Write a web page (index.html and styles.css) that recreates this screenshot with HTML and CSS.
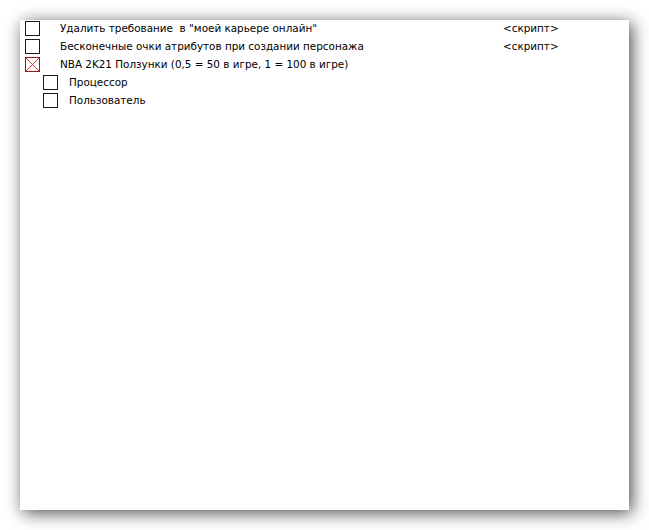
FILE: index.html
```html
<!DOCTYPE html>
<html lang="ru">
<head>
<meta charset="utf-8">
<link rel="stylesheet" href="styles.css">
</head>
<body>
<div class="panel">
  <div class="row">
    <span class="box"></span>
    <span class="label wide">Удалить требование  в "моей карьере онлайн"</span>
    <span class="value">&lt;скрипт&gt;</span>
  </div>
  <div class="row">
    <span class="box"></span>
    <span class="label wide">Бесконечные очки атрибутов при создании персонажа</span>
    <span class="value">&lt;скрипт&gt;</span>
  </div>
  <div class="row">
    <span class="box crossed"><svg viewBox="0 0 15 15" width="15" height="15"><path d="M1 1L14 14M14 1L1 14" stroke="#e0303a" stroke-width="1" fill="none"/></svg></span>
    <span class="label">NBA 2K21 Ползунки (0,5 = 50 в игре, 1 = 100 в игре)</span>
  </div>
  <div class="row sub">
    <span class="box"></span>
    <span class="label">Процессор</span>
  </div>
  <div class="row sub">
    <span class="box"></span>
    <span class="label">Пользователь</span>
  </div>
</div>
</body>
</html>
```
FILE: styles.css
```css
html, body {
  margin: 0;
  padding: 0;
  background: #ffffff;
}
body {
  width: 649px;
  height: 530px;
  overflow: hidden;
  font-family: "DejaVu Sans", "Liberation Sans", sans-serif;
  font-size: 10.4px;
  color: #000;
}
.panel {
  margin: 20px 0 0 20px;
  width: 609px;
  height: 490px;
  background: #fff;
  box-shadow: 3px 3px 16px rgba(0, 0, 0, 0.7);
  padding: 1px 0 0 5px;
  box-sizing: border-box;
}
.row {
  display: flex;
  align-items: flex-start;
  height: 18px;
}
.box {
  width: 15px;
  height: 15px;
  border: 1px solid #1a1a1a;
  box-sizing: border-box;
  flex: none;
  position: relative;
  overflow: hidden;
}
.box.crossed {
  border-color: #8b1a1a;
}
.box svg {
  position: absolute;
  left: -1px;
  top: -1px;
}
.label {
  margin-left: 20px;
  white-space: pre;
  line-height: 14px;
}
.label.wide {
  width: 443px;
  flex: none;
}
.value {
  line-height: 14px;
  white-space: pre;
}
.sub {
  padding-left: 18px;
}
.sub .label {
  margin-left: 11px;
}
```
